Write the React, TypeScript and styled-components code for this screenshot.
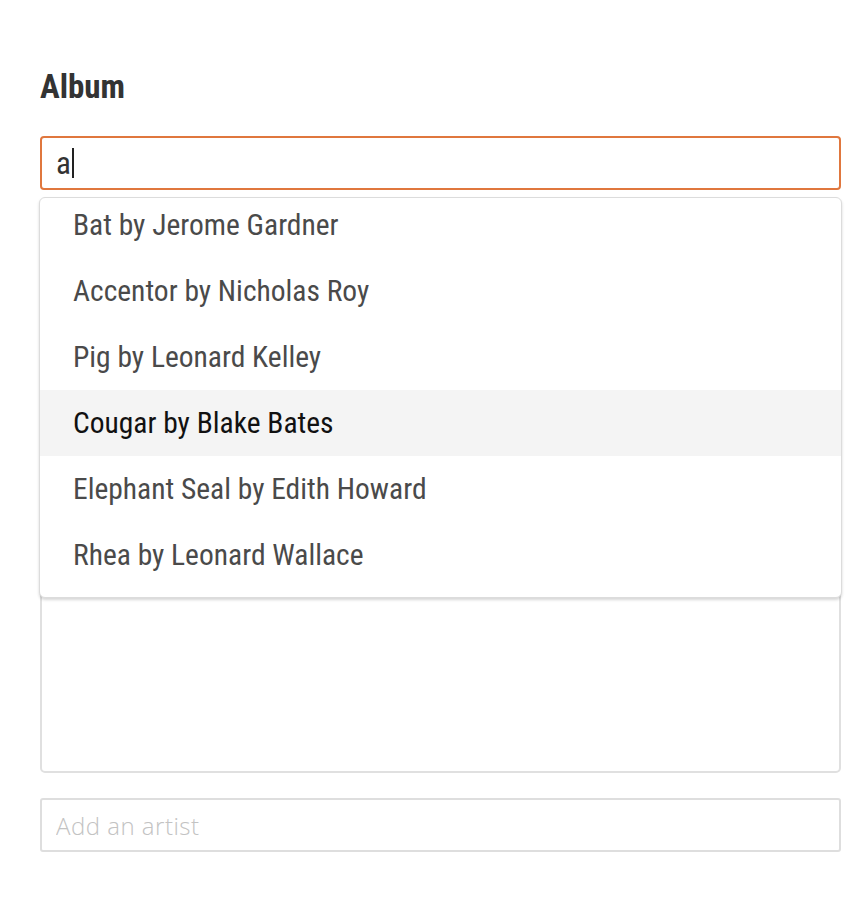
import React from "react";
import styled, { createGlobalStyle } from "styled-components";

const Global = createGlobalStyle`
  html, body { margin: 0; padding: 0; background: #ffffff; }
  body { font-family: Roboto, "Liberation Sans", sans-serif; }
`;

const Page = styled.div`
  padding: 60px 23px 40px 40px;
  display: flex;
  flex-direction: column;
`;

const Heading = styled.h2`
  margin: 0;
  font-family: Roboto, "Liberation Sans", sans-serif;
  font-stretch: 75%;
  font-weight: 700;
  font-size: 33px;
  line-height: 54px;
  color: #333333;
`;

const Field = styled.div`
  position: relative;
  margin-top: 22px;
`;

const TextInput = styled.div`
  box-sizing: border-box;
  height: 54px;
  border: 2px solid #e0773e;
  border-radius: 4px;
  display: flex;
  align-items: center;
  padding: 0 14px;
  font-family: Roboto, "Liberation Sans", sans-serif;
  font-stretch: 75%;
  font-weight: 380;
  font-size: 31px;
  color: #333333;
`;

const Caret = styled.span`
  display: inline-block;
  width: 2px;
  height: 30px;
  margin-left: 1px;
  background: #222222;
`;

const Menu = styled.div`
  position: absolute;
  top: 61px;
  left: -1px;
  right: -1px;
  z-index: 2;
  box-sizing: border-box;
  height: 401px;
  overflow: hidden;
  background: #ffffff;
  border: 1px solid #dcdcdc;
  border-radius: 6px;
  box-shadow: 0 2px 3px rgba(0, 0, 0, 0.16);
`;

const List = styled.ul`
  list-style: none;
  margin: -6px 0 0 0;
  padding: 0;
`;

const Item = styled.li<{ $active?: boolean }>`
  height: 66px;
  display: flex;
  align-items: center;
  padding-left: 33px;
  font-family: Roboto, "Liberation Sans", sans-serif;
  font-stretch: 75%;
  font-weight: 380;
  font-size: 29.5px;
  color: ${(p) => (p.$active ? "#111111" : "#4a4a4a")};
  background: ${(p) => (p.$active ? "#f4f4f4" : "transparent")};
`;

const ArtistBox = styled.div`
  box-sizing: border-box;
  margin-top: 15px;
  height: 568px;
  border: 2px solid #e0e0e0;
  border-radius: 5px;
`;

const AddInput = styled.input`
  box-sizing: border-box;
  margin-top: 25px;
  width: 100%;
  height: 54px;
  border: 2px solid #dedede;
  border-radius: 3px;
  padding: 0 14px;
  font-family: "Open Sans", "Liberation Sans", sans-serif;
  font-size: 24px;
  font-weight: 300;
  letter-spacing: 0.5px;
  outline: none;
  &::placeholder { color: #c3c3c3; }
`;

const albums = [
  "Bat by Jerome Gardner",
  "Accentor by Nicholas Roy",
  "Pig by Leonard Kelley",
  "Cougar by Blake Bates",
  "Elephant Seal by Edith Howard",
  "Rhea by Leonard Wallace",
];

export default function App() {
  return (
    <>
      <Global />
      <Page>
        <Heading>Album</Heading>
        <Field>
          <TextInput>
            a<Caret />
          </TextInput>
          <Menu>
            <List>
              {albums.map((a, i) => (
                <Item key={a} $active={i === 3}>
                  {a}
                </Item>
              ))}
            </List>
          </Menu>
          <ArtistBox />
        </Field>
        <AddInput placeholder="Add an artist" readOnly />
      </Page>
    </>
  );
}
